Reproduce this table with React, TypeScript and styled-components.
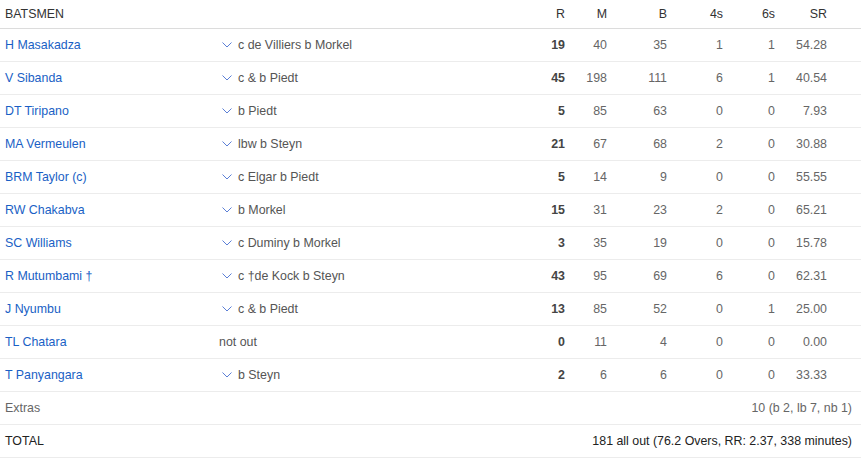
import React from 'react';
import styled, { createGlobalStyle } from 'styled-components';

const GlobalStyle = createGlobalStyle`
  body {
    margin: 0;
    background: #fff;
    font-family: "Liberation Sans", Arial, sans-serif;
  }
`;

const Table = styled.div`
  width: 861px;
  font-size: 12.4px;
  color: #666;
`;

const Row = styled.div<{ $head?: boolean }>`
  display: grid;
  grid-template-columns: 218px 307px 40px 42px 60px 56px 52px 52px 34px;
  align-items: center;
  height: ${(p) => (p.$head ? '28px' : '32px')};
  border-bottom: 1px solid ${(p) => (p.$head ? '#dcdcdc' : '#ececec')};
`;

const SummaryRow = styled.div`
  display: flex;
  align-items: center;
  justify-content: space-between;
  height: 32px;
  padding: 0 9px 0 5px;
  border-bottom: 1px solid #ececec;
`;

const HeadLabel = styled.div<{ $right?: boolean }>`
  color: #333;
  text-align: ${(p) => (p.$right ? 'right' : 'left')};
  padding-left: ${(p) => (p.$right ? '0' : '5px')};
`;

const Name = styled.a`
  padding-left: 5px;
  color: #1a5fc5;
  text-decoration: none;
`;

const Dismissal = styled.div<{ $plain?: boolean }>`
  display: flex;
  align-items: center;
  gap: 6px;
  padding-left: ${(p) => (p.$plain ? '1px' : '0')};
  color: #555;
`;

const Chevron = styled.svg`
  width: 10px;
  height: 6px;
  margin-left: 4px;
  flex: none;
`;

const Num = styled.div<{ $bold?: boolean }>`
  text-align: right;
  color: ${(p) => (p.$bold ? '#444' : '#666')};
  font-weight: ${(p) => (p.$bold ? 700 : 400)};
`;

const SummaryText = styled.span<{ $strong?: boolean }>`
  color: ${(p) => (p.$strong ? '#222' : '#666')};
`;

type Bat = {
  name: string;
  out: string;
  r: number;
  m: number;
  b: number;
  f: number;
  s: number;
  sr: string;
  notOut?: boolean;
};

const batsmen: Bat[] = [
  { name: 'H Masakadza', out: 'c de Villiers b Morkel', r: 19, m: 40, b: 35, f: 1, s: 1, sr: '54.28' },
  { name: 'V Sibanda', out: 'c & b Piedt', r: 45, m: 198, b: 111, f: 6, s: 1, sr: '40.54' },
  { name: 'DT Tiripano', out: 'b Piedt', r: 5, m: 85, b: 63, f: 0, s: 0, sr: '7.93' },
  { name: 'MA Vermeulen', out: 'lbw b Steyn', r: 21, m: 67, b: 68, f: 2, s: 0, sr: '30.88' },
  { name: 'BRM Taylor (c)', out: 'c Elgar b Piedt', r: 5, m: 14, b: 9, f: 0, s: 0, sr: '55.55' },
  { name: 'RW Chakabva', out: 'b Morkel', r: 15, m: 31, b: 23, f: 2, s: 0, sr: '65.21' },
  { name: 'SC Williams', out: 'c Duminy b Morkel', r: 3, m: 35, b: 19, f: 0, s: 0, sr: '15.78' },
  { name: 'R Mutumbami †', out: 'c †de Kock b Steyn', r: 43, m: 95, b: 69, f: 6, s: 0, sr: '62.31' },
  { name: 'J Nyumbu', out: 'c & b Piedt', r: 13, m: 85, b: 52, f: 0, s: 1, sr: '25.00' },
  { name: 'TL Chatara', out: 'not out', r: 0, m: 11, b: 4, f: 0, s: 0, sr: '0.00', notOut: true },
  { name: 'T Panyangara', out: 'b Steyn', r: 2, m: 6, b: 6, f: 0, s: 0, sr: '33.33' },
];

const ChevronIcon = () => (
  <Chevron viewBox="0 0 10 6">
    <polyline points="0.5,0.5 5,5 9.5,0.5" fill="none" stroke="#5b7fd6" strokeWidth="1" />
  </Chevron>
);

export default function App() {
  return (
    <>
      <GlobalStyle />
      <Table>
        <Row $head>
          <HeadLabel>BATSMEN</HeadLabel>
          <div />
          <HeadLabel $right>R</HeadLabel>
          <HeadLabel $right>M</HeadLabel>
          <HeadLabel $right>B</HeadLabel>
          <HeadLabel $right>4s</HeadLabel>
          <HeadLabel $right>6s</HeadLabel>
          <HeadLabel $right>SR</HeadLabel>
          <div />
        </Row>
        {batsmen.map((b) => (
          <Row key={b.name}>
            <Name href="#">{b.name}</Name>
            <Dismissal $plain={b.notOut}>
              {!b.notOut && <ChevronIcon />}
              {b.out}
            </Dismissal>
            <Num $bold>{b.r}</Num>
            <Num>{b.m}</Num>
            <Num>{b.b}</Num>
            <Num>{b.f}</Num>
            <Num>{b.s}</Num>
            <Num>{b.sr}</Num>
            <div />
          </Row>
        ))}
        <SummaryRow>
          <SummaryText>Extras</SummaryText>
          <SummaryText>10 (b 2, lb 7, nb 1)</SummaryText>
        </SummaryRow>
        <SummaryRow>
          <SummaryText $strong>TOTAL</SummaryText>
          <SummaryText $strong>181 all out (76.2 Overs, RR: 2.37, 338 minutes)</SummaryText>
        </SummaryRow>
      </Table>
    </>
  );
}
